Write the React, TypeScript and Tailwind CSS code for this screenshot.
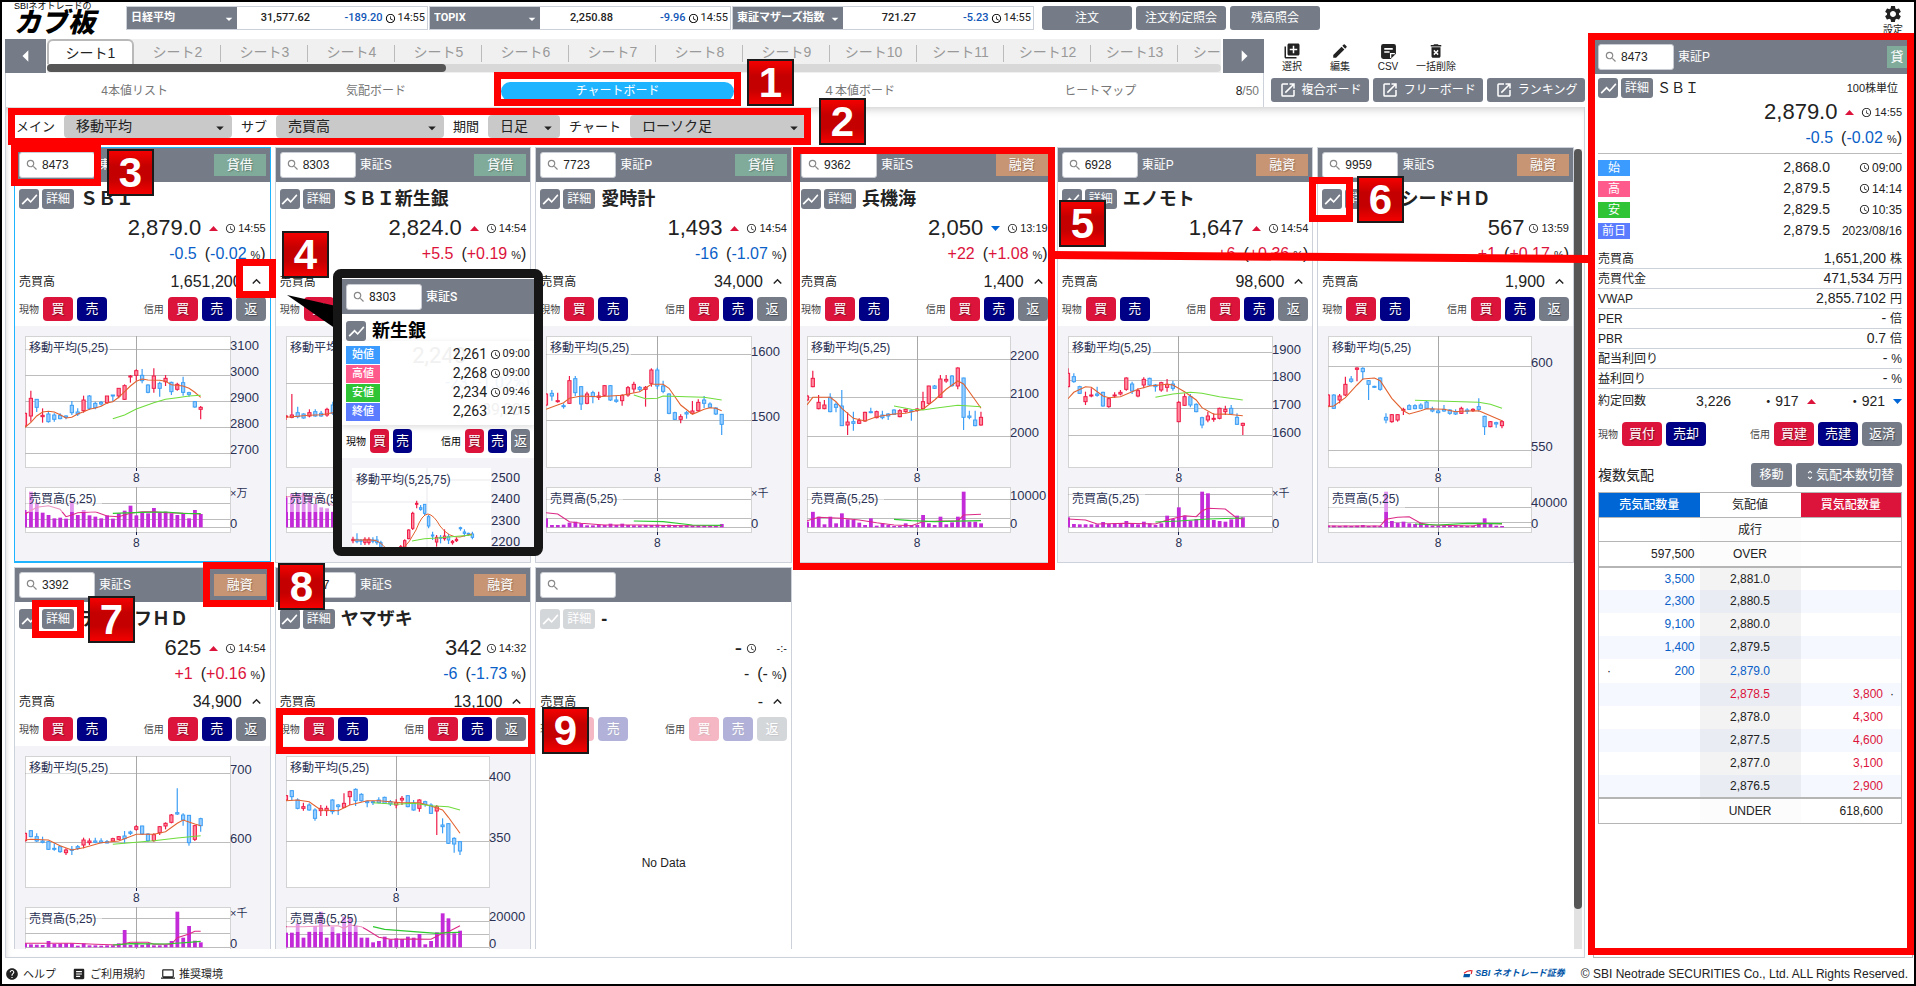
import { ReactNode, useId } from "react"
import clsx from "clsx"
import {
  MdAccessTime,
  MdArrowDropDown,
  MdArrowLeft,
  MdArrowRight,
  MdArticle,
  MdDeleteForever,
  MdEdit,
  MdHelp,
  MdKeyboardArrowUp,
  MdLaptop,
  MdLibraryAdd,
  MdOpenInNew,
  MdSearch,
  MdSettings,
  MdShowChart,
  MdUnfoldMore,
} from "react-icons/md"

interface ChartData {
  width: number
  // high top bottom low color, one candle per comma
  candles: string
  // "index,y" points
  ma5: string
  ma25: string
  grid: [number, string][]
  volumes: number[]
  volMa5: string
  volMa25: string
  volGrid: number[]
  volLabel: string
  volLabelY: number
}

interface Stock {
  code: string
  market: string
  credit: string
  name: string
  price: string
  direction?: "up" | "down"
  time: string
  change: string
  rate: string
  volume: string
  selected?: boolean
  chart?: ChartData
}

const sbiChart: ChartData = {
  width: 205,
  candles:
    "818 820 858 862 r,752 775 828 845 r,778 778 802 816 b,805 826 830 848 r,815 822 845 848 b,820 825 838 845 b,820 826 836 838 b,826 828 832 838 b,783 796 818 825 b,805 816 822 828 b,767 780 812 818 r,765 768 805 810 b,785 790 803 808 b,783 787 792 797 b,768 768 788 792 r,765 765 768 785 b,745 745 768 775 r,733 737 778 780 r,705 708 711 728 r,688 692 706 722 r,687 706 722 730 b,733 735 757 760 b,685 708 745 758 r,725 730 745 770 b,705 715 725 738 r,725 727 755 765 b,728 733 748 752 r,710 728 757 767 b,755 758 763 770 b,783 785 801 803 b,798 802 808 838 r",
  ma5: "0,862 1,847 2,828 3,816 4,814 5,816 6,824 7,834 8,832 9,822 10,815 11,808 12,804 13,799 14,789 15,785 16,772 17,755 18,738 19,724 20,717 21,720 23,721 24,724 25,734 27,738 28,745 29,757 30,772",
  ma25: "15,836 17,825 19,807 22,788 24,778 26,773 28,768 30,766",
  grid: [[628, "3100"], [706, "3000"], [784, "2900"], [862, "2800"], [940, "2700"]],
  volumes: [1110, 1055, 1088, 1118, 1125, 1135, 1133, 1136, 1082, 1125, 1110, 1126, 1130, 1135, 1126, 1136, 1120, 1112, 1097, 1126, 1117, 1120, 1104, 1118, 1115, 1120, 1125, 1120, 1135, 1110, 1122],
  volMa5: "0,1122 2,1102 4,1097 6,1108 7,1130 8,1125 9,1118 12,1115 14,1128 16,1130 18,1120 20,1115 22,1115 24,1118 27,1120 30,1122",
  volMa25: "15,1120 20,1117 24,1116 27,1120 30,1121",
  volGrid: [1090, 1137],
  volLabel: "×万",
  volLabelY: 1058,
}

const shinseiChart: ChartData = {
  width: 205,
  candles:
    "825 828 831 840 r,762 825 832 835 r,800 818 830 835 b,820 822 834 836 b,808 818 828 832 r,808 815 828 830 b,813 820 828 830 b,803 808 825 830 r,785 795 820 825 b,790 800 815 820 b",
  ma5: "0,832 4,826 6,824 9,815",
  ma25: "",
  grid: [[730, "2900"], [862, "2800"]],
  volumes: [1072, 1062, 1060, 1058, 1068, 1092, 1102, 1105, 1115, 1120],
  volMa5: "0,1070 3,1068 5,1072 7,1090 9,1102",
  volMa25: "",
  volGrid: [1090, 1137],
  volLabel: "×千",
  volLabelY: 1058,
}

const aichiChart: ChartData = {
  width: 205,
  candles:
    "760 762 795 798 r,750 760 768 782 b,758 782 785 788 r,790 797 800 806 b,708 722 790 792 r,708 716 758 768 b,738 740 792 810 b,755 762 790 793 r,752 758 770 790 b,755 768 772 780 r,735 737 766 768 r,735 737 780 783 b,768 780 784 788 b,763 766 782 797 r,738 743 765 770 r,725 733 747 758 r,738 742 748 755 b,738 742 748 800 r,685 690 730 740 r,683 690 738 748 b,722 738 754 760 b,760 762 820 823 b,815 818 838 840 b,823 830 838 850 r,813 818 822 836 b,783 813 820 822 r,778 787 812 816 r,768 780 790 804 b,787 792 802 804 b,802 804 822 825 b,822 823 853 885 b",
  ma5: "0,808 3,788 4,775 6,768 9,770 13,766 16,755 18,733 20,733 21,745 23,795 25,823 27,808 28,803 29,805 30,812",
  ma25: "15,765 17,776 19,775 20,768 24,770 27,772 30,780",
  grid: [[644, "1600"], [840, "1500"]],
  volumes: [1135, 1155, 1155, 1154, 1148, 1145, 1150, 1156, 1156, 1155, 1155, 1151, 1155, 1151, 1155, 1156, 1156, 1155, 1155, 1154, 1155, 1154, 1155, 1156, 1156, 1157, 1156, 1156, 1156, 1156, 1152],
  volMa5: "0,1118 2,1122 4,1145 6,1150 10,1155 16,1155 24,1157 30,1157",
  volMa25: "15,1143 20,1145 25,1155 30,1156",
  volGrid: [1078, 1135],
  volLabel: "×千",
  volLabelY: 1058,
}

const heikiChart: ChartData = {
  width: 203,
  candles:
    "766 768 780 782 r,692 715 740 742 r,765 787 806 808 r,780 795 806 808 r,760 772 815 817 b,787 793 802 817 b,750 798 857 858 b,817 846 855 885 r,815 845 850 872 b,835 842 850 852 r,815 817 843 845 r,803 815 818 820 b,812 815 833 835 r,812 825 833 838 b,820 822 828 840 b,808 810 823 825 b,808 812 830 832 r,806 808 815 818 r,808 812 815 842 b,805 807 811 815 r,755 785 806 808 r,737 738 790 792 r,735 738 745 747 b,705 717 772 774 r,705 718 723 728 r,705 708 737 740 b,682 684 738 748 r,713 714 832 870 b,812 828 832 838 b,812 840 857 859 b,815 832 855 857 r",
  ma5: "0,795 1,772 4,772 5,785 6,805 8,835 10,843 12,830 15,822 17,820 20,808 22,780 24,748 26,723 27,732 29,780 30,805",
  ma25: "15,798 18,808 20,810 22,805 26,796 30,800",
  grid: [[657, "2200"], [772, "2100"], [888, "2000"]],
  volumes: [1145, 1115, 1130, 1153, 1130, 1150, 1120, 1138, 1140, 1148, 1155, 1135, 1157, 1150, 1155, 1158, 1158, 1150, 1155, 1155, 1125, 1150, 1155, 1130, 1153, 1147, 1130, 1055, 1145, 1145, 1150],
  volMa5: "0,1142 2,1132 6,1135 9,1140 12,1148 15,1155 18,1157 20,1145 23,1143 26,1143 27,1125 30,1123",
  volMa25: "15,1138 18,1142 22,1145 30,1142",
  volGrid: [1078, 1135],
  volLabel: "10000",
  volLabelY: 1067,
}

const enomotoChart: ChartData = {
  width: 204,
  candles:
    "685 700 740 742 r,700 710 725 728 b,737 740 760 762 b,755 770 785 795 r,745 765 768 772 r,740 762 766 770 b,755 757 798 800 b,772 776 800 803 r,757 765 768 773 r,750 757 762 766 r,712 714 748 752 r,725 732 753 762 b,745 752 768 772 r,712 718 735 745 r,713 715 735 738 b,732 735 740 755 b,725 728 750 755 r,717 733 742 755 r,722 732 745 752 b,783 787 845 847 r,760 770 796 798 r,762 770 795 802 b,790 793 815 817 b,830 833 855 865 b,815 828 840 847 r,820 835 838 845 r,803 805 835 838 r,797 808 815 825 r,795 805 822 825 b,820 832 853 855 b,848 850 856 885 r",
  ma5: "0,776 1,757 3,740 4,742 6,768 7,773 9,770 12,748 14,738 17,733 18,735 20,755 22,780 23,803 25,823 27,822 30,827",
  ma25: "15,772 18,762 21,757 23,760 26,770 30,780",
  grid: [[638, "1900"], [721, "1800"], [804, "1700"], [887, "1600"]],
  volumes: [1132, 1152, 1153, 1153, 1153, 1153, 1146, 1152, 1150, 1150, 1143, 1150, 1153, 1145, 1150, 1155, 1150, 1127, 1137, 1102, 1127, 1142, 1137, 1055, 1060, 1140, 1143, 1145, 1138, 1127, 1132],
  volMa5: "0,1137 3,1140 5,1152 10,1150 15,1152 17,1140 20,1127 22,1130 23,1113 24,1105 27,1107 29,1135 30,1137",
  volMa25: "15,1146 19,1143 24,1137 30,1134",
  volGrid: [1063, 1129],
  volLabel: "×千",
  volLabelY: 1058,
}

const seedChart: ChartData = {
  width: 203,
  candles:
    "763 765 798 800 r,763 765 805 807 b,762 768 780 790 r,710 733 765 768 r,708 717 724 728 b,682 684 688 724 r,682 685 695 720 b,720 722 733 780 b,737 739 742 744 b,712 714 748 752 b,820 832 840 850 b,822 824 845 848 r,822 824 840 845 r,803 808 811 825 r,793 797 808 810 b,793 797 806 808 b,790 795 805 808 b,783 786 805 807 b,800 807 813 817 b,808 813 818 820 b,795 808 813 815 b,808 810 820 824 b,808 815 822 825 b,800 805 820 822 r,805 810 814 822 b,805 808 812 816 r,775 800 808 815 b,827 829 860 885 b,843 845 860 862 r,845 848 852 863 b,840 845 857 865 r",
  ma5: "0,800 1,798 3,773 5,735 6,717 8,714 9,722 11,775 13,812 14,822 16,812 17,806 20,808 22,815 24,813 26,812 27,820 30,842",
  ma25: "15,781 19,783 23,785 26,787 28,793 30,805",
  grid: [[679, "600"], [931, "550"]],
  volumes: [1157, 1157, 1158, 1157, 1158, 1157, 1155, 1158, 1157, 1158, 1055, 1143, 1148, 1145, 1150, 1152, 1148, 1153, 1157, 1157, 1156, 1157, 1157, 1157, 1158, 1157, 1150, 1135, 1152, 1157, 1158],
  volMa5: "0,1158 9,1158 10,1138 12,1132 14,1130 16,1150 18,1155 25,1158 27,1150 30,1152",
  volMa25: "15,1152 19,1155 24,1150 30,1151",
  volGrid: [1102, 1147],
  volLabel: "40000",
  volLabelY: 1088,
}

const lifeChart: ChartData = {
  width: 205,
  candles:
    "818 820 842 845 r,810 812 830 832 b,820 830 843 846 b,830 843 847 850 b,843 845 868 870 b,850 865 868 872 b,857 860 875 878 b,865 870 878 885 r,858 868 871 885 b,855 860 865 870 b,833 840 855 865 r,835 843 848 855 r,833 843 847 850 b,835 843 848 850 b,840 845 849 850 b,833 836 843 845 r,828 830 838 840 r,813 828 836 850 b,812 816 820 825 b,795 800 808 812 r,797 798 822 825 b,820 822 842 845 b,820 824 842 845 r,798 800 818 825 r,787 790 798 808 r,762 765 787 790 r,685 758 762 765 b,760 765 780 797 b,765 766 848 857 b,795 797 838 843 r,773 776 797 815 b",
  ma5: "0,840 1,838 4,840 6,857 8,870 10,863 13,848 16,843 19,823 22,823 24,815 26,790 27,780 29,792 30,797",
  ma25: "15,853 18,848 22,842 26,834 30,827",
  grid: [[640, "700"], [847, "600"]],
  volumes: [1150, 1153, 1154, 1155, 1143, 1152, 1151, 1150, 1150, 1157, 1150, 1156, 1156, 1157, 1156, 1156, 1150, 1110, 1155, 1148, 1155, 1150, 1156, 1156, 1155, 1143, 1055, 1133, 1098, 1142, 1147],
  volMa5: "0,1150 8,1150 12,1153 16,1155 18,1147 21,1147 22,1153 25,1153 26,1133 28,1122 29,1114 30,1114",
  volMa25: "15,1155 18,1151 24,1152 28,1147 30,1144",
  volGrid: [1075, 1120],
  volLabel: "×千",
  volLabelY: 1058,
}

const yamazakiChart: ChartData = {
  width: 203,
  candles:
    "705 707 720 722 r,690 692 710 722 b,715 720 745 748 b,728 740 745 752 r,730 735 750 752 b,745 750 775 782 b,735 745 752 768 r,737 745 752 768 r,718 720 755 763 b,732 735 740 765 b,700 730 742 745 r,692 695 710 735 r,685 688 722 738 b,700 703 722 725 b,722 724 728 742 b,722 725 728 735 b,712 720 728 730 b,710 712 730 732 b,720 725 732 738 b,718 728 735 745 r,708 715 720 735 r,705 707 740 742 b,720 730 750 752 b,718 720 745 755 r,722 725 733 740 b,730 735 760 762 b,735 740 753 825 r,775 795 800 820 b,790 791 850 852 b,832 835 852 878 b,843 845 873 885 b",
  ma5: "0,722 2,720 4,725 6,750 9,752 11,735 14,722 16,722 20,728 23,728 25,738 27,750 28,772 30,820",
  ma25: "15,728 19,733 22,730 25,737 28,740 30,750",
  grid: [[661, "400"], [844, "350"]],
  volumes: [1118, 1118, 1090, 1133, 1115, 1098, 1055, 1133, 1100, 1120, 1070, 1075, 1097, 1133, 1133, 1147, 1143, 1130, 1138, 1135, 1137, 1130, 1133, 1122, 1153, 1143, 1117, 1060, 1075, 1120, 1112],
  volMa5: "0,1100 3,1100 6,1098 9,1097 10,1105 11,1095 13,1100 14,1110 16,1132 18,1138 22,1137 25,1138 27,1120 28,1115 30,1097",
  volMa25: "15,1100 17,1108 22,1115 26,1120 28,1118 30,1117",
  volGrid: [1085, 1123],
  volLabel: "20000",
  volLabelY: 1072,
}

const stocks: Stock[] = [
  { code: "8473", market: "東証P", credit: "貸借", name: "ＳＢＩ", price: "2,879.0", direction: "up", time: "14:55", change: "-0.5", rate: "-0.02", volume: "1,651,200", selected: true, chart: sbiChart },
  { code: "8303", market: "東証S", credit: "貸借", name: "ＳＢＩ新生銀", price: "2,824.0", direction: "up", time: "14:54", change: "+5.5", rate: "+0.19", volume: "310,900", chart: shinseiChart },
  { code: "7723", market: "東証P", credit: "貸借", name: "愛時計", price: "1,493", direction: "up", time: "14:54", change: "-16", rate: "-1.07", volume: "34,000", chart: aichiChart },
  { code: "9362", market: "東証S", credit: "融資", name: "兵機海", price: "2,050", direction: "down", time: "13:19", change: "+22", rate: "+1.08", volume: "1,400", chart: heikiChart },
  { code: "6928", market: "東証P", credit: "融資", name: "エノモト", price: "1,647", direction: "up", time: "14:54", change: "+6", rate: "+0.36", volume: "98,600", chart: enomotoChart },
  { code: "9959", market: "東証S", credit: "融資", name: "アシードＨＤ", price: "567", time: "13:59", change: "+1", rate: "+0.17", volume: "1,900", chart: seedChart },
  { code: "3392", market: "東証S", credit: "融資", name: "デリカフＨＤ", price: "625", direction: "up", time: "14:54", change: "+1", rate: "+0.16", volume: "34,900", chart: lifeChart },
  { code: "6147", market: "東証S", credit: "融資", name: "ヤマザキ", price: "342", time: "14:32", change: "-6", rate: "-1.73", volume: "13,100", chart: yamazakiChart },
  { code: "", market: "", credit: "", name: "-", price: "-", time: "-:-", change: "-", rate: "-", volume: "-" },
]

const RED = "#ef1c48"
const BLUE = "#3d9ff5"

// chart data is kept in thirds of a pixel, counted from the top of the sheet
const py = (v: number) => (v - 558) / 3

function toPoints(line: string, step: number, x0: number) {
  return line
    .split(" ")
    .filter(Boolean)
    .map(p => {
      const [i, v] = p.split(",").map(Number)
      return `${(x0 + i * step).toFixed(1)},${py(v).toFixed(1)}`
    })
    .join(" ")
}

function Candles({ data, x0, step, y, half }: { data: string; x0: number; step: number; y: (v: number) => number; half: number }) {
  return (
    <>
      {data.split(",").map((c, i) => {
        const parts = c.split(" ")
        const [high, top, bottom, low] = parts.slice(0, 4).map(Number)
        const up = parts[4] === "r"
        const x = x0 + i * step
        return (
          <g key={i} stroke={up ? RED : BLUE}>
            <line x1={x} x2={x} y1={y(high)} y2={y(low)} strokeWidth="1.2" />
            <rect
              x={x - half}
              y={y(top)}
              width={half * 2}
              height={Math.max(1, y(bottom) - y(top))}
              fill={up ? "#ff8a9e" : "#97cdff"}
              strokeWidth="1"
            />
          </g>
        )
      })}
    </>
  )
}

function StockChart({ data }: { data: ChartData }) {
  const id = useId()
  const x0 = 10
  const right = x0 + data.width
  const step = (data.width * 0.857) / 30
  const mid = x0 + step * 19
  return (
    <svg viewBox="0 0 254 236" preserveAspectRatio="xMinYMin meet" className="block h-[236px] w-full bg-[#f4f4f8]" fill="none">
      <clipPath id={id}>
        <rect x={x0} y="0" width={data.width} height="236" />
      </clipPath>
      <rect x={x0} y="10" width={data.width} height="131" fill="#fff" stroke="#d3d3d3" strokeWidth="1" shapeRendering="crispEdges" />
      <rect x={x0} y="161" width={data.width} height="45" fill="#fff" stroke="#d3d3d3" strokeWidth="1" shapeRendering="crispEdges" />
      <g stroke="#bdbdbd" strokeWidth="1" shapeRendering="crispEdges">
        {data.grid.map(([v]) => (
          <line key={v} x1={x0} x2={right} y1={py(v)} y2={py(v)} />
        ))}
        {data.volGrid.map(v => (
          <line key={v} x1={x0} x2={right} y1={py(v)} y2={py(v)} />
        ))}
        <line x1={x0} x2={right} y1="201" y2="201" />
        <line x1={mid} x2={mid} y1="10" y2="141" stroke="#a8a8a8" />
        <line x1={mid} x2={mid} y1="161" y2="206" stroke="#a8a8a8" />
      </g>
      <g clipPath={`url(#${id})`}>
        <Candles data={data.candles} x0={x0} step={step} y={py} half={1.6} />
        <polyline points={toPoints(data.ma5, step, x0)} stroke="#e2622f" strokeWidth="1.1" />
        <polyline points={toPoints(data.ma25, step, x0)} stroke="#6fdc3c" strokeWidth="1.1" />
        {data.volumes.map((v, i) => (
          <rect key={i} x={x0 + i * step - 1.8} y={py(v)} width="3.8" height={py(1162) - py(v)} fill="#c42bd8" />
        ))}
        <polyline points={toPoints(data.volMa5, step, x0)} stroke="#dc2a86" strokeWidth="1.1" />
        <polyline points={toPoints(data.volMa25, step, x0)} stroke="#2fc92f" strokeWidth="1.2" />
      </g>
      <rect x={x0 + 1} y="11" width="84" height="21" fill="#fff" opacity="0.5" />
      <rect x={x0 + 1} y="163" width="76" height="23" fill="#fff" opacity="0.5" />
      <g stroke="#141c48" strokeWidth="1" shapeRendering="crispEdges">
        <line x1={mid} x2={mid} y1="142" y2="145" />
        <line x1={mid} x2={mid} y1="206" y2="209" />
      </g>
      <g fill="#2a3154" fontSize="12">
        <text x="14" y="26">移動平均(5,25)</text>
        <text x="14" y="177">売買高(5,25)</text>
        <text x={mid} y="156" textAnchor="middle">8</text>
        <text x={mid} y="221" textAnchor="middle">8</text>
      </g>
      <g fill="#2a3154" fontSize="13">
        {data.grid.map(([v, label]) => (
          <text key={label} x={right} y={py(v - 12) + 5}>{label}</text>
        ))}
        <text x={right} y={py(data.volLabelY) + 4} fontSize={data.volLabel.length > 2 ? 13 : 11}>{data.volLabel}</text>
        <text x={right} y="202">0</text>
      </g>
    </svg>
  )
}

function Triangle({ direction }: { direction: "up" | "down" }) {
  return (
    <svg viewBox="0 0 9 5" className="h-[5px] w-[9px] shrink-0">
      <path d={direction === "up" ? "M0 5 L4.5 0 L9 5Z" : "M0 0 L4.5 5 L9 0Z"} fill={direction === "up" ? "#dc143c" : "#0066d6"} />
    </svg>
  )
}

function SearchBox({ code, id }: { code: string; id: string }) {
  return (
    <label className="flex h-[26px] w-[76px] shrink-0 items-center rounded-[3px] border border-[#c9ccd2] bg-white">
      <MdSearch className="ml-[5px] size-[14px] shrink-0 text-[#888]" />
      <input aria-label={`銘柄コード ${id}`} defaultValue={code} className="ml-[3px] w-12 min-w-0 bg-transparent text-[12px] text-[#222] outline-none" />
    </label>
  )
}

const tradeColors = {
  buy: "bg-[#dc143c]",
  sell: "bg-[#000086]",
  repay: "bg-[#757c88]",
}

function TradeButton({ kind, className, children }: { kind: keyof typeof tradeColors; className: string; children: ReactNode }) {
  return (
    <button className={clsx("h-6 shrink-0 rounded-[4px] text-[13px] leading-6 text-white [text-shadow:1px_1px_1px_#0006]", tradeColors[kind], className)}>
      {children}
    </button>
  )
}

function ChartButton() {
  return (
    <button aria-label="チャート" className="flex size-5 shrink-0 items-center justify-center rounded-[3px] bg-[#757c88] text-white">
      <MdShowChart className="size-[19px]" />
    </button>
  )
}

function toneOf(value: string) {
  if (value.startsWith("+")) return "text-[#dc143c]"
  if (value.length > 1) return "text-[#0a5fc8]"
  return "text-[#222]"
}

function StockCard({ stock, index }: { stock: Stock; index: number }) {
  const empty = !stock.code
  return (
    <article className={clsx("flex h-[416px] min-w-0 flex-col border bg-white", stock.selected ? "border-[#1eb4ff] border-b-2" : "border-[#cdd1da]")}>
      <div className="flex h-[34px] shrink-0 items-center bg-[#757c88] px-1">
        <SearchBox code={stock.code} id={`${index + 1}`} />
        <span className="ml-1 flex-1 text-[12px] text-white">{stock.market}</span>
        {stock.credit && (
          <span className={clsx("h-[22px] w-[52px] text-center text-[13px] leading-[22px] text-white [text-shadow:1px_1px_1px_#0004]", stock.credit === "貸借" ? "bg-[#80ab9a]" : "bg-[#c79574]")}>
            {stock.credit}
          </span>
        )}
      </div>
      <div className="mt-[7px] flex h-5 shrink-0 items-center px-1">
        <div className={clsx("flex gap-[3px]", empty && "opacity-30")}>
          <ChartButton />
          <button className="h-5 w-8 rounded-[3px] bg-[#757c88] text-[12px] leading-5 text-white">詳細</button>
        </div>
        <h2 className="ml-[6px] text-[18px] leading-5 font-bold whitespace-nowrap text-[#222]">{stock.name}</h2>
      </div>
      <div className="mt-[5px] flex h-7 shrink-0 items-center justify-end px-1">
        <span className="text-[22px] leading-7 text-[#222]">{stock.price}</span>
        {stock.direction && (
          <span className="mr-[3px] ml-2">
            <Triangle direction={stock.direction} />
          </span>
        )}
        <MdAccessTime className="mr-[2px] ml-1 size-[11px] text-[#333]" />
        <span className={clsx("text-right text-[11px] text-[#222]", empty && "w-7")}>{stock.time}</span>
      </div>
      <div className={clsx("flex h-6 shrink-0 items-baseline justify-end px-1 text-[16px] leading-6", toneOf(stock.change))}>
        <span>{stock.change}</span>
        <span className="ml-2 text-[#222]">(</span>
        <span>{stock.rate}</span>
        <span className="ml-1 text-[11px] text-[#222]">%</span>
        <span className="text-[#222]">)</span>
      </div>
      <div className="flex h-[31px] shrink-0 items-center pr-[5px] pl-1 text-[#222]">
        <span className="flex-1 text-[12px]">売買高</span>
        <span className="text-[16px]">{stock.volume}</span>
        <button aria-label="四本値を表示" className="ml-[6px]">
          <MdKeyboardArrowUp className="size-[17px]" />
        </button>
      </div>
      <div className="flex h-6 shrink-0 items-center px-1 text-[10px] text-[#444]">
        <span className="mr-1">現物</span>
        <div className={clsx("flex gap-1", empty && "opacity-30")}>
          <TradeButton kind="buy" className="w-[30px]">買</TradeButton>
          <TradeButton kind="sell" className="w-[30px]">売</TradeButton>
        </div>
        <span className="mr-1 ml-auto">信用</span>
        <div className={clsx("flex gap-1", empty && "opacity-30")}>
          <TradeButton kind="buy" className="w-[30px]">買</TradeButton>
          <TradeButton kind="sell" className="w-[30px]">売</TradeButton>
          <TradeButton kind="repay" className="w-[30px]">返</TradeButton>
        </div>
      </div>
      <div className="mt-[5px] min-h-0 flex-1 overflow-hidden">
        {stock.chart ? <StockChart data={stock.chart} /> : <p className="pt-[108px] text-center text-[12px] text-[#222]">No Data</p>}
      </div>
    </article>
  )
}

function Ticker({ label, options, value, diff, time, className, valueClass }: { label: string; options: string; value: string; diff: string; time: string; className: string; valueClass: string }) {
  return (
    <div className={clsx("flex h-6 shrink-0 items-center border border-[#ccd0d8] text-[11px]", className)} style={{ fontFamily: 'Roboto, "Noto Sans CJK JP", sans-serif' }}>
      <div className="relative h-full">
        <select aria-label={label} className="h-full w-[110px] appearance-none bg-[#757c88] pl-1 font-bold text-white">
          <option>{options}</option>
        </select>
        <MdArrowDropDown className="pointer-events-none absolute top-1 right-0 size-4 text-white" />
      </div>
      <span className={clsx("text-right font-medium text-[#222]", valueClass)}>{value}</span>
      <span className="flex-1 text-right font-medium text-[#1257b8]">{diff}</span>
      <MdAccessTime className="mx-[2px] size-[11px]" />
      <span className="mr-[2px] text-[#222]">{time}</span>
    </div>
  )
}

function FilterSelect({ label, value, className }: { label: string; value: string; className: string }) {
  return (
    <label className="flex items-center text-[13px] text-[#222]">
      <span className="mr-[9px] whitespace-nowrap">{label}</span>
      <span className={clsx("relative mr-[9px] block h-[23px]", className)}>
        <select className="h-full w-full appearance-none rounded-[4px] bg-[#c9c9c9] pl-3 text-[14px] leading-[23px]">
          <option>{value}</option>
        </select>
        <MdArrowDropDown className="pointer-events-none absolute top-1 right-[3px] size-[18px]" />
      </span>
    </label>
  )
}

function Logo() {
  return (
    <h1 className="ml-3 w-[112px] shrink-0 text-black">
      <span className="block text-[9px] leading-[9px] whitespace-nowrap">SBIネオトレードの</span>
      <span className="block text-[27px] leading-6 font-black italic">カブ板</span>
    </h1>
  )
}

function CsvIcon() {
  return (
    <svg viewBox="0 0 16 16" className="size-[17px]">
      <path d="M3 1 H13 A2 2 0 0 1 15 3 V10 L10 15 H3 A2 2 0 0 1 1 13 V3 A2 2 0 0 1 3 1Z" fill="#222" />
      <path d="M4 5.5 H12 M4 8.5 H9" stroke="#fff" strokeWidth="1.5" />
      <path d="M10 14 V10 H14" stroke="#fff" strokeWidth="1.2" fill="none" />
    </svg>
  )
}

const tools = [
  { label: "選択", icon: <MdLibraryAdd className="size-[18px]" /> },
  { label: "編集", icon: <MdEdit className="size-[18px]" /> },
  { label: "CSV", icon: <CsvIcon /> },
  { label: "一括削除", icon: <MdDeleteForever className="size-[18px]" /> },
]

const sheets = Array.from({ length: 14 }, (_, i) => `シート${i + 1}`)
const views = ["4本値リスト", "気配ボード", "チャートボード", "４本値ボード", "ヒートマップ"]

function TopBar() {
  return (
    <header className="flex h-[37px] shrink-0">
      <Logo />
      <div className="mt-1 flex">
        <Ticker label="指数1" options="日経平均" value="31,577.62" diff="-189.20" time="14:55" className="w-[302px]" valueClass="w-[73px]" />
        <Ticker label="指数2" options="TOPIX" value="2,250.88" diff="-9.96" time="14:55" className="ml-px w-[302px]" valueClass="w-[73px]" />
        <Ticker label="指数3" options="東証マザーズ指数" value="721.27" diff="-5.23" time="14:55" className="ml-px w-[302px]" valueClass="w-[73px]" />
      </div>
      <div className="mt-1 ml-2 flex gap-1">
        {["注文", "注文約定照会", "残高照会"].map(name => (
          <button key={name} className="h-6 w-[90px] rounded-[3px] bg-[#757c88] text-[12px] leading-6 text-white">{name}</button>
        ))}
      </div>
      <button className="mt-[2px] mr-[11px] ml-auto flex flex-col items-center text-[10px] leading-[11px] text-[#222]">
        <MdSettings className="size-5" />
        設定
      </button>
    </header>
  )
}

function SheetTabs() {
  return (
    <div className="flex h-[34px]">
      <button aria-label="前へ" className="flex w-[41px] shrink-0 items-center justify-center bg-[#757c88] text-white">
        <MdArrowLeft className="size-7" />
      </button>
      <div className="ml-px flex min-w-0 flex-1 flex-col bg-[#f0f0f0]">
        <div className="flex h-[25px] overflow-hidden">
          {sheets.map((sheet, i) => (
            <button
              key={sheet}
              className={clsx(
                "w-[87px] shrink-0 text-[14px] leading-6",
                i === 0
                  ? "rounded-t-[6px] border-2 border-b-0 border-[#b9b9b9] bg-white text-[#222]"
                  : "bg-[linear-gradient(#bbb,#bbb)] bg-[length:1px_17px] bg-[right_6px] bg-no-repeat text-[#999]"
              )}
            >
              {sheet}
            </button>
          ))}
        </div>
        <div className="h-2 rounded-full bg-[#d8d8d8]">
          <div className="h-2 w-[34%] rounded-full bg-[#565656]" />
        </div>
      </div>
      <button aria-label="次へ" className="ml-[2px] flex w-[41px] shrink-0 items-center justify-center bg-[#757c88] text-white">
        <MdArrowRight className="size-7" />
      </button>
    </div>
  )
}

function ViewTabs() {
  return (
    <nav className="flex h-[34px] items-center border-x border-[#cdd1da] pt-[2px] pl-2 text-[12px] text-[#777]">
      {views.map(view => (
        <button key={view} className="flex flex-1 justify-center">
          <span className={clsx("h-[19px] w-[233px] leading-[19px]", view === "チャートボード" && "rounded-full bg-[#1eb4ff] text-white")}>{view}</span>
        </button>
      ))}
      <span className="w-[42px] pr-1 text-right">
        <b className="font-medium text-[#222]">8</b>/50
      </span>
    </nav>
  )
}

function Toolbar() {
  return (
    <div className="flex h-[68px] w-[321px] shrink-0 flex-col">
      <div className="mt-[2px] flex h-9 pl-1">
        {tools.map(tool => (
          <button key={tool.label} className="flex w-12 flex-col items-center text-[10px] leading-3 whitespace-nowrap text-[#222]">
            <span className="flex h-5 items-center">{tool.icon}</span>
            {tool.label}
          </button>
        ))}
      </div>
      <div className="mt-px flex gap-1 pl-[7px]">
        {["複合ボード", "フリーボード", "ランキング"].map(name => (
          <button key={name} className="flex h-6 grow items-center justify-center gap-[5px] rounded-[3px] bg-[#757c88] text-[12px] whitespace-nowrap text-white">
            <MdOpenInNew className="size-[18px]" />
            {name}
          </button>
        ))}
      </div>
    </div>
  )
}

function Board() {
  return (
    <main className="flex min-h-0 flex-1 flex-col border-x border-b border-[#cdd1da] bg-white pt-2 pr-[2px] pl-2 shadow-[inset_0_8px_10px_-6px_#0003,inset_4px_0_6px_-4px_#0002]">
      <div className="flex h-[23px] shrink-0 pl-[2px]">
        <FilterSelect label="メイン" value="移動平均" className="w-[168px]" />
        <FilterSelect label="サブ" value="売買高" className="w-[168px]" />
        <FilterSelect label="期間" value="日足" className="w-[72px]" />
        <FilterSelect label="チャート" value="ローソク足" className="w-[176px]" />
      </div>
      <div className="mt-[9px] mb-2 flex min-h-0 flex-1 overflow-hidden">
        <div className="grid min-w-0 flex-1 auto-rows-max grid-cols-6 gap-1">
          {stocks.map((stock, i) => (
            <StockCard key={i} stock={stock} index={i} />
          ))}
        </div>
        <div className="mt-[2px] w-2 shrink-0 bg-[#e2e2e2]">
          <div className="h-[95%] rounded-full bg-[#565656]" />
        </div>
      </div>
    </main>
  )
}

const prices = [
  { label: "始", color: "bg-[#3b9bff]", value: "2,868.0", time: "09:00" },
  { label: "高", color: "bg-[#ff5a8c]", value: "2,879.5", time: "14:14" },
  { label: "安", color: "bg-[#2fc436]", value: "2,829.5", time: "10:35" },
  { label: "前日", color: "bg-[#5b7cff]", value: "2,879.5", time: "2023/08/16" },
]

const stats = [
  ["売買高", "1,651,200", "株"],
  ["売買代金", "471,534", "万円"],
  ["VWAP", "2,855.7102", "円"],
  ["PER", "-", "倍"],
  ["PBR", "0.7", "倍"],
  ["配当利回り", "-", "%"],
  ["益利回り", "-", "%"],
]

const depth = [
  { ask: "3,500", price: "2,881.0", bid: "" },
  { ask: "2,300", price: "2,880.5", bid: "" },
  { ask: "9,100", price: "2,880.0", bid: "" },
  { ask: "1,400", price: "2,879.5", bid: "" },
  { ask: "200", price: "2,879.0", bid: "", best: "ask" },
  { ask: "", price: "2,878.5", bid: "3,800", best: "bid" },
  { ask: "", price: "2,878.0", bid: "4,300" },
  { ask: "", price: "2,877.5", bid: "4,600" },
  { ask: "", price: "2,877.0", bid: "3,100" },
  { ask: "", price: "2,876.5", bid: "2,900" },
]

function DepthTable() {
  return (
    <table className="mt-[5px] w-full table-fixed border-collapse border border-[#b5b5b5] text-[12px] text-[#222]">
      <thead>
        <tr className="h-[25px]">
          <th className="bg-[#0066d6] font-medium text-white">売気配数量</th>
          <th className="font-normal">気配値</th>
          <th className="bg-[#dc143c] font-medium text-white">買気配数量</th>
        </tr>
      </thead>
      <tbody>
        <tr className="h-6 border-t border-[#b5b5b5]">
          <td />
          <td className="bg-[#fcfcfc] text-center">成行</td>
          <td />
        </tr>
        <tr className="h-[25px] border-t border-b-2 border-[#b5b5b5]">
          <td className="pr-[5px] text-right">597,500</td>
          <td className="bg-[#fcfcfc] text-center">OVER</td>
          <td />
        </tr>
        {depth.map((row, i) => (
          <tr key={row.price} className={clsx(row.best === "ask" ? "h-6" : "h-[23px]", i % 2 === 1 && "bg-[#f5f9ff]")}>
            <td className="pr-[5px] text-right text-[#0a5fc8]">
              <span className="flex justify-between pl-2">
                <span className="text-[#222]">{row.best === "ask" && "·"}</span>
                {row.ask}
              </span>
            </td>
            <td
              className={clsx(
                "text-center",
                i % 2 === 1 ? "bg-[#e9edf3]" : "bg-[#f3f3f3]",
                row.best === "ask" && "text-[#0a5fc8]",
                row.best === "bid" && "text-[#dc143c]"
              )}
            >
              {row.price}
            </td>
            <td className="text-right text-[#dc143c]">
              {row.bid}
              <span className="inline-block w-[18px] text-center text-[#222]">{row.best === "bid" && "·"}</span>
            </td>
          </tr>
        ))}
        <tr className="h-[26px] border-t-2 border-[#b5b5b5]">
          <td />
          <td className="bg-[#fcfcfc] text-center">UNDER</td>
          <td className="pr-[18px] text-right">618,600</td>
        </tr>
      </tbody>
    </table>
  )
}

function DetailPanel() {
  return (
    <aside className="mr-px ml-2 w-[320px] shrink-0 border border-[#b5b5b5] text-[#222]">
      <div className="flex h-[34px] items-center bg-[#757c88] pr-[5px] pl-1">
        <SearchBox code="8473" id="詳細" />
        <span className="ml-1 flex-1 text-[12px] text-white">東証P</span>
        <span className="h-[22px] w-5 bg-[#80ab9a] text-center text-[13px] leading-[22px] text-white">貸</span>
      </div>
      <div className="pr-[10px] pl-1">
        <div className="mt-1 flex h-5 items-center">
          <ChartButton />
          <button className="ml-[3px] h-5 w-8 rounded-[3px] bg-[#757c88] text-[12px] leading-5 text-white">詳細</button>
          <span className="ml-1 flex-1 text-[14px]">ＳＢＩ</span>
          <span className="pr-1 text-[11px]">100株単位</span>
        </div>
        <div className="flex h-7 items-center justify-end">
          <span className="text-[22px] leading-7">2,879.0</span>
          <span className="mr-[3px] ml-2">
            <Triangle direction="up" />
          </span>
          <MdAccessTime className="mr-[2px] ml-1 size-[11px]" />
          <span className="text-[11px]">14:55</span>
        </div>
        <div className="flex h-7 items-baseline justify-end border-b border-[#bbb] text-[16px] leading-6 text-[#0a5fc8]">
          <span>-0.5</span>
          <span className="ml-2 text-[#222]">(</span>
          <span>-0.02</span>
          <span className="ml-1 text-[11px] text-[#222]">%</span>
          <span className="text-[#222]">)</span>
        </div>
        <div className="mt-[3px]">
          {prices.map(row => (
            <div key={row.label} className="flex h-[21px] items-center">
              <span className={clsx("h-4 w-8 text-center text-[12px] leading-4 text-white", row.color)}>{row.label}</span>
              <span className="flex-1 text-right text-[14px]">{row.value}</span>
              <span className="flex w-[72px] items-center justify-end gap-[2px] text-[12px]">
                {row.time.includes(":") && <MdAccessTime className="size-[11px]" />}
                {row.time}
              </span>
            </div>
          ))}
        </div>
        <dl className="mt-2">
          {stats.map(([label, value, unit]) => (
            <div key={label} className="flex h-5 items-center justify-between border-b border-[#cdd1da]">
              <dt className="text-[12px] leading-5">{label}</dt>
              <dd className="text-[14px] leading-5">
                {value} <span className="text-[12px]">{unit}</span>
              </dd>
            </div>
          ))}
        </dl>
        <div className="flex h-6 items-center text-[14px]">
          <span className="w-[60px] text-[12px]">約定回数</span>
          <span className="w-[73px] text-right">3,226</span>
          <span className="ml-auto flex items-center gap-2">
            <span>・917</span>
            <Triangle direction="up" />
          </span>
          <span className="ml-8 flex items-center gap-2">
            <span>・921</span>
            <Triangle direction="down" />
          </span>
        </div>
        <div className="mt-[9px] flex h-6 items-center text-[10px] text-[#444]">
          <span className="mr-1">現物</span>
          <div className="flex gap-1">
            <TradeButton kind="buy" className="w-10">買付</TradeButton>
            <TradeButton kind="sell" className="w-10">売却</TradeButton>
          </div>
          <span className="mr-1 ml-auto">信用</span>
          <div className="flex gap-1">
            <TradeButton kind="buy" className="w-10">買建</TradeButton>
            <TradeButton kind="sell" className="w-10">売建</TradeButton>
            <TradeButton kind="repay" className="w-10">返済</TradeButton>
          </div>
        </div>
        <div className="mt-[17px] flex h-6 items-center gap-1">
          <h3 className="flex-1 text-[14px]">複数気配</h3>
          <button className="h-6 w-[41px] rounded-[3px] bg-[#757c88] text-[12px] text-white">移動</button>
          <button className="flex h-6 w-[106px] items-center justify-center rounded-[3px] bg-[#757c88] text-[13px] text-white">
            <MdUnfoldMore className="size-3" />
            気配本数切替
          </button>
        </div>
        <DepthTable />
      </div>
    </aside>
  )
}

function Footer() {
  return (
    <footer className="flex h-[26px] shrink-0 items-center pt-[6px] pr-[6px] pl-[3px] text-[#222]">
      <nav className="flex gap-4 text-[11px]">
        <a href="#help" className="flex items-center gap-1"><MdHelp className="size-[14px]" />ヘルプ</a>
        <a href="#terms" className="flex items-center gap-1"><MdArticle className="size-[14px]" />ご利用規約</a>
        <a href="#env" className="flex items-center gap-1"><MdLaptop className="size-[14px]" />推奨環境</a>
      </nav>
      <span className="ml-auto flex items-center text-[9px] font-bold text-[#0054a6] italic">
        <svg viewBox="0 0 12 10" className="mr-[2px] h-2 w-[10px]">
          <path d="M1 4 Q6 0 11 1 L10 5" fill="none" stroke="#e0202a" strokeWidth="1.4" />
          <path d="M1 5 H9 L8 9 H0Z" fill="#0054a6" />
        </svg>
        SBI ネオトレード証券
      </span>
      <span className="ml-4 text-[12px]">© SBI Neotrade SECURITIES Co., Ltd. ALL Rights Reserved.</span>
    </footer>
  )
}

const popupRows = [
  { label: "始値", color: "bg-[#3b9bff]", value: "2,261", time: "09:00" },
  { label: "高値", color: "bg-[#ff5a8c]", value: "2,268", time: "09:00" },
  { label: "安値", color: "bg-[#2fc436]", value: "2,234", time: "09:46" },
  { label: "終値", color: "bg-[#5b7cff]", value: "2,263", time: "12/15" },
]

const popupCandles =
  "860 868 872 880 r,850 868 875 880 b,868 870 874 885 b,862 868 878 885 r,862 868 878 884 r,862 870 874 880 b,858 870 878 884 b,872 878 892 900 b,890 895 900 905 b,895 898 905 908 r,898 900 908 910 b,895 898 906 910 r,885 890 906 908 r,868 872 892 895 r,838 840 866 868 r,785 790 835 840 r,752 760 762 775 r,765 773 778 782 b,762 763 790 795 b,795 800 828 835 b,845 855 858 870 b,855 862 876 890 r,855 862 864 880 b,838 858 866 872 r,852 860 870 882 b,870 874 878 884 r,862 868 872 876 r,830 833 836 842 b,838 846 850 860 b,848 850 853 858 b,845 852 862 868 b"

function PopupChart() {
  const y = (v: number) => (v - 624) / 3
  return (
    <svg viewBox="0 0 190 89" className="block h-[89px] w-full bg-[#f4f4f8]" preserveAspectRatio="xMinYMin meet" fill="none">
      <rect x="10" y="10" width="139" height="79" fill="#fff" />
      <path d="M10 22 H149 M10 44 H149 M10 66 H149 M85 10 V89" stroke="#e9e9ef" strokeWidth="1" />
      <Candles data={popupCandles} x0={11} step={3.98} y={y} half={1.2} />
      <path d="M11 82 L30 82 Q38 82 45 92 H60 Q68 84 74 72 Q80 56 86 56 Q92 57 98 68 Q107 80 118 79 L130 76" stroke="#e2622f" strokeWidth="1" />
      <path d="M70 83 Q82 80 95 80 L130 77" stroke="#6fdc3c" strokeWidth="1.2" />
      <g fill="#2a3154" fontSize="12">
        <text x="14" y="26">移動平均(5,25,75)</text>
      </g>
      <g fill="#2a3154" fontSize="13">
        <text x="149" y="24">2500</text>
        <text x="149" y="45">2400</text>
        <text x="149" y="67">2300</text>
        <text x="149" y="88">2200</text>
      </g>
    </svg>
  )
}

function Popup() {
  return (
    <div className="absolute top-[269px] left-[333px] h-[287px] w-[210px] overflow-hidden rounded-[8px] border-[9px] border-[#161616] bg-white" style={{ fontFamily: 'Roboto, "Noto Sans CJK JP", sans-serif' }}>
      <div className="mt-px flex h-[35px] items-center bg-[#757c88] pl-1">
        <SearchBox code="8303" id="吹き出し" />
        <span className="ml-1 text-[12px] font-medium text-white">東証S</span>
      </div>
      <div className="mt-[7px] flex h-5 items-center pl-1">
        <ChartButton />
        <b className="ml-[6px] text-[18px] leading-5">新生銀</b>
      </div>
      <div className="relative h-[84px] pt-1 pr-1 pl-1 shadow-[0_2px_6px_#0002]">
        <div className="absolute top-0 right-1 flex h-full flex-col justify-evenly text-right text-[16px] leading-6 text-[#f1f1f1]">
          <span className="pr-16 text-[22px]">2,240</span>
          <span className="text-[#f0f5fb]">-23 (-1.02%)</span>
          <span>89,000</span>
        </div>
        {popupRows.map(row => (
          <div key={row.label} className="relative flex h-[19px] items-center text-[#222]">
            <span className={clsx("h-[18px] w-[34px] text-center text-[11px] leading-[18px] font-medium text-white", row.color)}>{row.label}</span>
            <span className="flex-1 text-right text-[14px]">{row.value}</span>
            <span className="flex w-[43px] items-center justify-end gap-[2px] text-[11px]">
              {row.time.includes(":") && <MdAccessTime className="size-[11px]" />}
              {row.time}
            </span>
          </div>
        ))}
      </div>
      <div className="mt-1 mb-[5px] flex h-6 items-center pr-1 pl-1 text-[10px]">
        <span className="mr-1">現物</span>
        <div className="flex gap-1">
          <TradeButton kind="buy" className="w-[19px]">買</TradeButton>
          <TradeButton kind="sell" className="w-[19px]">売</TradeButton>
        </div>
        <span className="mr-1 ml-auto">信用</span>
        <div className="flex gap-1">
          <TradeButton kind="buy" className="w-[19px]">買</TradeButton>
          <TradeButton kind="sell" className="w-[19px]">売</TradeButton>
          <TradeButton kind="repay" className="w-[19px]">返</TradeButton>
        </div>
      </div>
      <PopupChart />
    </div>
  )
}

const frames = [
  "left-[494px] top-[72px] h-[34px] w-[247px]",
  "left-[8px] top-[108px] h-[37px] w-[803px]",
  "left-[11px] top-[145px] h-[41px] w-[90px]",
  "left-[236px] top-[259px] h-[39px] w-[40px]",
  "left-[793px] top-[147px] h-[423px] w-[262px]",
  "left-[1309px] top-[177px] h-[45px] w-[44px]",
  "left-[32px] top-[600px] h-[38px] w-[52px]",
  "left-[203px] top-[562px] h-[45px] w-[71px]",
  "left-[276px] top-[708px] h-[46px] w-[259px]",
  "bottom-[31px] right-[2px] top-[33px] w-[326px]",
]

const badges = [
  "left-[747px] top-[59px]",
  "left-[819px] top-[98px]",
  "left-[107px] top-[149px]",
  "left-[282px] top-[231px]",
  "left-[1059px] top-[200px]",
  "left-[1357px] top-[176px]",
  "left-[88px] top-[596px]",
  "left-[278px] top-[563px]",
  "left-[542px] top-[707px]",
]

// numbered guide marks laid over the screen
function Guide() {
  return (
    <div className="pointer-events-none absolute inset-0 overflow-hidden">
      <svg className="absolute inset-0 h-full w-full">
        <polygon points="287,295 336,306 336,329" fill="#000" />
        <line x1="1053" y1="255" x2="1590" y2="259" stroke="#f00" strokeWidth="8" />
      </svg>
      <Popup />
      {frames.map(frame => (
        <div key={frame} className={clsx("absolute border-[7px] border-[#f00]", frame)} />
      ))}
      {badges.map((badge, i) => (
        <div
          key={badge}
          className={clsx(
            "absolute flex size-[47px] items-center justify-center border-2 border-[#1a1a1a] bg-[linear-gradient(#f40000,#c40000_35%,#c40000_65%,#f40000)] text-[42px] leading-none font-bold text-white",
            badge
          )}
          style={{ fontFamily: '"Liberation Sans Narrow", "Liberation Sans", sans-serif' }}
        >
          {i + 1}
        </div>
      ))}
    </div>
  )
}

export default function App() {
  return (
    <div className="relative h-screen overflow-hidden bg-black p-[2px]" style={{ fontFamily: '"Liberation Sans", "Noto Sans CJK JP", sans-serif' }}>
      <div className="flex h-full flex-col bg-white">
        <TopBar />
        <div className="flex min-h-0 flex-1 pl-[3px]">
          <div className="flex min-w-0 flex-1 flex-col">
            <div className="flex">
              <div className="min-w-0 flex-1">
                <SheetTabs />
                <ViewTabs />
              </div>
              <Toolbar />
            </div>
            <Board />
          </div>
          <DetailPanel />
        </div>
        <Footer />
      </div>
      <Guide />
    </div>
  )
}
